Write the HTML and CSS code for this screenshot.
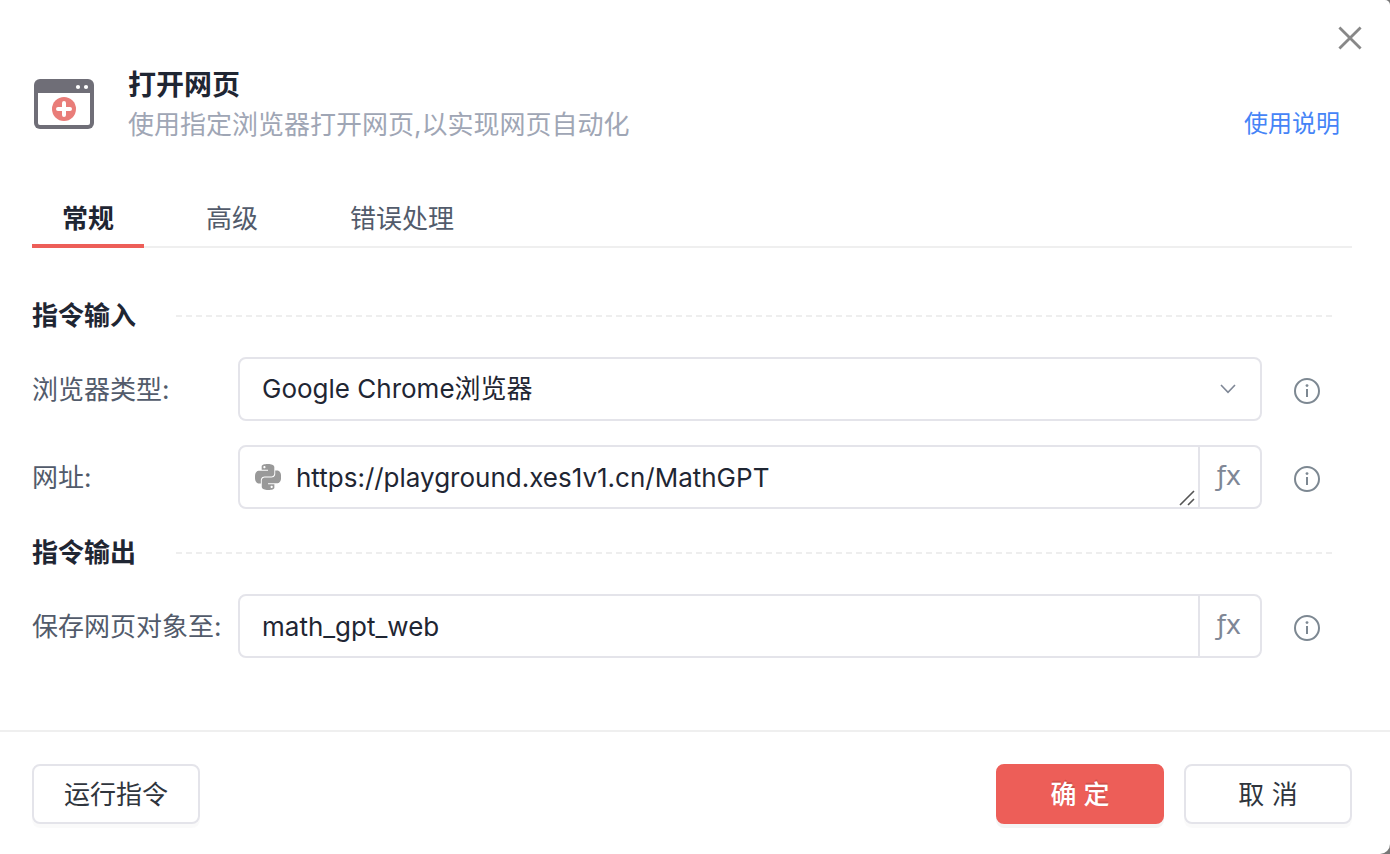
FILE: index.html
```html
<!DOCTYPE html>
<html lang="zh-CN">
<head>
    <meta charset="UTF-8">
    <meta name="viewport" content="width=device-width, initial-scale=1.0">
    <title>打开网页</title>
    <link rel="stylesheet" href="styles.css">
</head>
<body>
    <form class="dialog">
        <button type="button" class="close-btn" aria-label="关闭">
            <svg width="24" height="24" viewBox="0 0 24 24" fill="none" stroke="#888" stroke-width="2.8">
                <path d="M1.4 1.4 L22.6 22.6 M22.6 1.4 L1.4 22.6"/>
            </svg>
        </button>

        <header class="header">
            <svg class="header-icon" width="60" height="50" viewBox="0 0 60 50">
                <rect width="60" height="50" rx="6" fill="#6f6e77"/>
                <path d="M4 14 H56 V44 Q56 46 54 46 H6 Q4 46 4 44 Z" fill="#fff"/>
                <circle cx="44" cy="8" r="2.1" fill="#fff"/>
                <circle cx="52" cy="8" r="2.1" fill="#fff"/>
                <circle cx="30" cy="30" r="12" fill="#e97d79"/>
                <path d="M30 24 V36 M24 30 H36" stroke="#fff" stroke-width="4" stroke-linecap="round"/>
            </svg>
            <div class="header-text">
                <h1>打开网页</h1>
                <div class="header-desc">
                    <p>使用指定浏览器打开网页,以实现网页自动化</p>
                    <a href="#" class="help-link">使用说明</a>
                </div>
            </div>
        </header>

        <nav class="tabs">
            <a href="#general" class="tab active">常规</a>
            <a href="#advanced" class="tab">高级</a>
            <a href="#error" class="tab">错误处理</a>
        </nav>

        <main class="content">
            <section>
                <h2>指令输入</h2>
                <div class="form-row">
                    <label for="browser-type">浏览器类型:</label>
                    <div class="field">
                        <select id="browser-type">
                            <option>Google Chrome浏览器</option>
                        </select>
                        <svg class="arrow" width="16" height="10" viewBox="0 0 16 10" fill="none" stroke="#7f8796" stroke-width="1.6">
                            <path d="M1 1 L8 8.4 L15 1"/>
                        </svg>
                    </div>
                    <svg class="info" width="26" height="26" viewBox="0 0 26 26" fill="none" stroke="#7d8892" stroke-width="2">
                        <circle cx="13" cy="13" r="12"/>
                        <path d="M13 11 V19"/>
                        <circle cx="13" cy="7.6" r="1.4" fill="#7d8892" stroke="none"/>
                    </svg>
                </div>
                <div class="form-row">
                    <label for="url">网址:</label>
                    <div class="field">
                        <svg class="python" width="26" height="26" viewBox="0 0 24 24" fill="#999">
                            <path d="M14.25.18l.9.2.73.26.59.3.45.32.34.34.25.34.16.33.1.3.04.26.02.2-.01.13V8.5l-.05.63-.13.55-.21.46-.26.38-.3.31-.33.25-.35.19-.35.14-.33.1-.3.07-.26.04-.21.02H8.77l-.69.05-.59.14-.5.22-.41.27-.33.32-.27.35-.2.36-.15.37-.1.35-.07.32-.04.27-.02.21v3.06H3.17l-.21-.03-.28-.07-.32-.12-.35-.18-.36-.26-.36-.36-.35-.46-.32-.59-.28-.73-.21-.88-.14-1.05-.05-1.23.06-1.22.16-1.04.24-.87.32-.71.36-.57.4-.44.42-.33.42-.24.4-.16.36-.1.32-.05.24-.01h.16l.06.01h8.16v-.83H6.18l-.01-2.75-.02-.37.05-.34.11-.31.17-.28.25-.26.31-.23.38-.2.44-.18.51-.15.58-.12.64-.1.71-.06.77-.04.84-.02 1.27.05zm-6.3 1.98l-.23.33-.08.41.08.41.23.34.33.22.41.09.41-.09.33-.22.23-.34.08-.41-.08-.41-.23-.33-.33-.22-.41-.09-.41.09z"/>
                            <path d="M21.1 6.11l.28.06.32.12.35.18.36.27.36.35.35.47.32.59.28.73.21.88.14 1.04.05 1.23-.06 1.23-.16 1.04-.24.86-.32.71-.36.57-.4.45-.42.33-.42.24-.4.16-.36.09-.32.05-.24.02-.16-.01h-8.22v.82h5.84l.01 2.76.02.36-.05.34-.11.31-.17.29-.25.25-.31.24-.38.2-.44.17-.51.15-.58.13-.64.09-.71.07-.77.04-.84.01-1.27-.04-1.07-.14-.9-.2-.73-.25-.59-.3-.45-.33-.34-.34-.25-.34-.16-.33-.1-.3-.04-.25-.02-.2.01-.13v-5.34l.05-.64.13-.54.21-.46.26-.38.3-.32.33-.24.35-.2.35-.14.33-.1.3-.06.26-.04.21-.02.13-.01h5.84l.69-.05.59-.14.5-.21.41-.28.33-.32.27-.35.2-.36.15-.36.1-.35.07-.32.04-.28.02-.21V6.07h2.09l.14.01zm-6.47 14.25l-.23.33-.08.41.08.41.23.33.33.23.41.08.41-.08.33-.23.23-.33.08-.41-.08-.41-.23-.33-.33-.23-.41-.08-.41.08z"/>
                        </svg>
                        <textarea id="url" rows="1" spellcheck="false">https://playground.xes1v1.cn/MathGPT</textarea>
                        <svg class="grip" width="16" height="16" viewBox="0 0 16 16" fill="none" stroke="#555" stroke-width="1.6">
                            <path d="M1 15 L15 1 M9 15 L15 9"/>
                        </svg>
                        <button type="button" class="fx-btn">ƒx</button>
                    </div>
                    <svg class="info" width="26" height="26" viewBox="0 0 26 26" fill="none" stroke="#7d8892" stroke-width="2">
                        <circle cx="13" cy="13" r="12"/>
                        <path d="M13 11 V19"/>
                        <circle cx="13" cy="7.6" r="1.4" fill="#7d8892" stroke="none"/>
                    </svg>
                </div>
            </section>

            <section>
                <h2>指令输出</h2>
                <div class="form-row">
                    <label for="output-name">保存网页对象至:</label>
                    <div class="field">
                        <input type="text" id="output-name" value="math_gpt_web" spellcheck="false">
                        <button type="button" class="fx-btn">ƒx</button>
                    </div>
                    <svg class="info" width="26" height="26" viewBox="0 0 26 26" fill="none" stroke="#7d8892" stroke-width="2">
                        <circle cx="13" cy="13" r="12"/>
                        <path d="M13 11 V19"/>
                        <circle cx="13" cy="7.6" r="1.4" fill="#7d8892" stroke="none"/>
                    </svg>
                </div>
            </section>
        </main>

        <footer class="footer">
            <button type="button" class="btn">运行指令</button>
            <button type="submit" class="btn btn-primary">确 定</button>
            <button type="button" class="btn">取 消</button>
        </footer>
    </form>
</body>
</html>
```

FILE: styles.css
```css
* {
    box-sizing: border-box;
}
body {
    margin: 0;
    background-color: #777;
    font-family: Inter, "Noto Sans CJK SC", sans-serif;
    font-size: 26px;
    line-height: 40px;
    color: #1f2633;
}
h1, h2, p {
    margin: 0;
}
a {
    text-decoration: none;
}
button, input, select, textarea {
    font: inherit;
    color: inherit;
    margin: 0;
}
button {
    cursor: pointer;
}
svg {
    display: block;
    flex-shrink: 0;
}
.dialog {
    position: relative;
    display: flex;
    flex-direction: column;
    min-height: 100vh;
    background-color: #fff;
    border-radius: 0 5px 10px 0;
}
.close-btn {
    position: absolute;
    top: 18px;
    right: 20px;
    padding: 8px;
    border: none;
    background: none;
}

/* header */
.header {
    display: flex;
    align-items: center;
    gap: 34px;
    padding: 64px 50px 0 34px;
}
.header-text {
    flex: 1;
}
h1 {
    font-size: 28px;
    font-weight: 600;
    line-height: 42px;
}
.header-desc {
    display: flex;
    justify-content: space-between;
    line-height: 38px;
    color: #9fa6b5;
}
.help-link {
    font-size: 24px;
    line-height: 36px;
    color: #4584f7;
}

/* tabs */
.tabs {
    display: flex;
    gap: 32px;
    margin: 44px 38px 0 32px;
    box-shadow: inset 0 -2px #efefef;
}
.tab {
    height: 60px;
    padding: 11px 30px 0;
    color: #525b6b;
}
.tab.active {
    color: #1f2633;
    font-weight: bold;
    border-bottom: 4px solid #ed5e58;
}

/* form */
.content {
    display: flex;
    flex-direction: column;
    gap: 24px;
    padding: 48px 58px 24px 32px;
}
h2 {
    display: flex;
    align-items: center;
    gap: 40px;
    margin-bottom: 21px;
    font-size: 26px;
    font-weight: 600;
    line-height: 40px;
}
h2::after {
    content: "";
    flex: 1;
    height: 2px;
    background: repeating-linear-gradient(to right, #eee 0 6px, transparent 6px 10px);
}
.form-row {
    display: flex;
    align-items: center;
    padding-right: 12px;
}
.form-row + .form-row {
    margin-top: 24px;
}
.form-row label {
    width: 206px;
    padding-top: 2px;
    white-space: nowrap;
    color: #525b6b;
}
.field {
    position: relative;
    flex: 1;
    display: flex;
    align-items: center;
    min-width: 0;
    height: 64px;
    border: 2px solid #e4e4ea;
    border-radius: 8px;
}
.field input, .field select, .field textarea {
    flex: 1;
    min-width: 0;
    height: 60px;
    padding: 10px 22px;
    border: none;
    outline: none;
    background: none;
}
.field select {
    appearance: none;
}
.field textarea {
    padding: 11px 15px 9px;
    overflow: hidden;
    resize: none;
}
.arrow {
    position: absolute;
    right: 24px;
    pointer-events: none;
}
.grip {
    position: absolute;
    right: 65px;
    bottom: 1px;
    cursor: ns-resize;
}
.python {
    margin-left: 15px;
}
.fx-btn {
    width: 62px;
    height: 60px;
    padding: 0 2px 2px 0;
    border: none;
    border-left: 2px solid #e4e4ea;
    background: none;
    font-family: "DejaVu Sans", sans-serif;
    font-size: 26px;
    color: #7f8796;
}
.info {
    margin: 4px 0 0 32px;
}

/* footer */
.footer {
    display: flex;
    gap: 20px;
    margin-top: auto;
    padding: 32px 38px 30px 32px;
    border-top: 2px solid #efefef;
}
.btn {
    width: 168px;
    height: 60px;
    padding: 2px 0 0;
    border: 2px solid #e4e4ea;
    border-radius: 8px;
    background-color: #fff;
    box-shadow: 0 4px 0 rgba(0, 0, 0, 0.02);
    color: #2f353d;
}
.btn:first-child {
    margin-right: auto;
}
.btn-primary {
    border-color: #ed5e58;
    background-color: #ed5e58;
    box-shadow: 0 4px 0 rgba(0, 0, 0, 0.045);
    color: #fff;
    font-weight: 500;
    text-shadow: 0 -2px 0 rgba(0, 0, 0, 0.12);
}
```
